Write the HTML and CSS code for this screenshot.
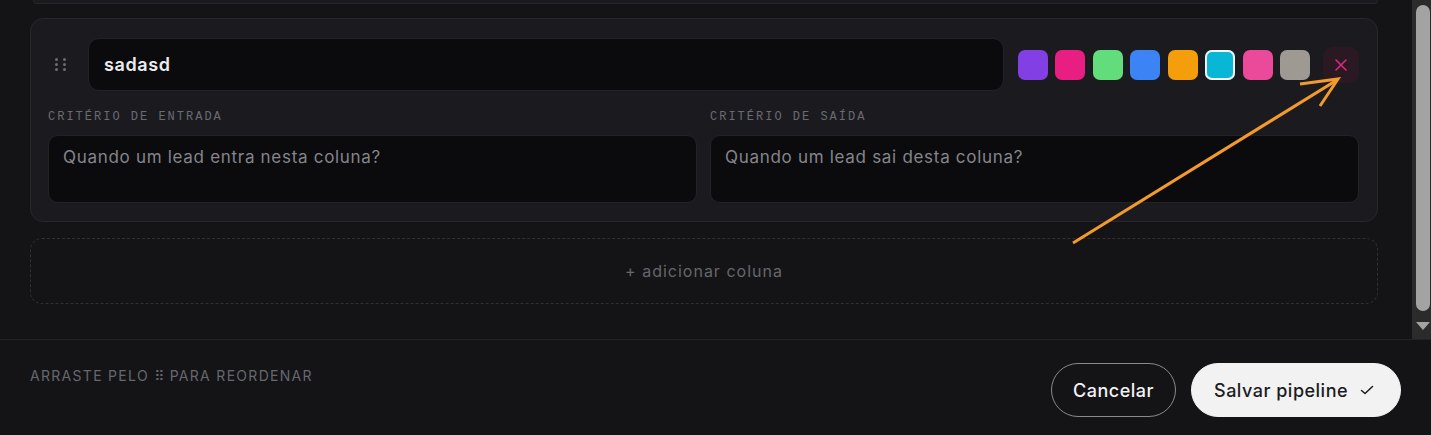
FILE: index.html
```html
<!DOCTYPE html>
<html lang="pt-BR">
<head>
<meta charset="utf-8">
<title>Editar pipeline</title>
<link rel="stylesheet" href="styles.css">
</head>
<body>
<div class="modal">
  <div class="modal-body">
    <div class="scroll-content">
      <div class="prev-card"></div>
      <div class="card">
        <div class="card-top">
          <div class="handle" aria-label="Arrastar">
            <span></span><span></span><span></span><span></span><span></span><span></span>
          </div>
          <input class="name-input" type="text" value="sadasd">
          <div class="swatches">
            <button class="swatch sw-purple"></button>
            <button class="swatch sw-magenta"></button>
            <button class="swatch sw-green"></button>
            <button class="swatch sw-blue"></button>
            <button class="swatch sw-orange"></button>
            <button class="swatch sw-cyan selected"></button>
            <button class="swatch sw-pink"></button>
            <button class="swatch sw-stone"></button>
          </div>
          <button class="remove-btn" aria-label="Remover coluna">
            <svg width="14" height="14" viewBox="0 0 14 14"><path d="M2 2 L12 12 M12 2 L2 12" stroke="#d9287e" stroke-width="1.6" stroke-linecap="round" fill="none"/></svg>
          </button>
        </div>
        <div class="criteria">
          <div class="field">
            <label class="field-label">CRITÉRIO DE ENTRADA</label>
            <textarea class="field-input" placeholder="Quando um lead entra nesta coluna?"></textarea>
          </div>
          <div class="field">
            <label class="field-label">CRITÉRIO DE SAÍDA</label>
            <textarea class="field-input" placeholder="Quando um lead sai desta coluna?"></textarea>
          </div>
        </div>
      </div>
      <button class="add-col">+ adicionar coluna</button>
    </div>
    <div class="scrollbar" aria-hidden="true">
      <div class="scroll-thumb"></div>
      <div class="scroll-arrow"></div>
    </div>
  </div>
  <div class="modal-footer">
    <div class="hint">ARRASTE PELO <span class="hint-glyph">⠿</span> PARA REORDENAR</div>
    <div class="actions">
      <button class="btn btn-ghost">Cancelar</button>
      <button class="btn btn-primary">Salvar pipeline <svg class="check" width="16" height="12" viewBox="0 0 16 12"><path d="M2.5 6.5 L6 9.5 L13.5 2.5" stroke="#1c1c1e" stroke-width="1.5" fill="none" stroke-linecap="round" stroke-linejoin="round"/></svg></button>
    </div>
  </div>
  <svg class="annotation" width="1431" height="435" viewBox="0 0 1431 435">
    <path d="M1073 243 L1337 80" stroke="#f39a2c" stroke-width="3" fill="none"/>
    <path d="M1300 84 L1338 79 L1320 106" stroke="#f39a2c" stroke-width="3" fill="none" stroke-linejoin="miter"/>
  </svg>
</div>
</body>
</html>
```

FILE: styles.css
```css
* { box-sizing: border-box; }

html, body {
  margin: 0;
  padding: 0;
  background: #141416;
  height: 435px;
  overflow: hidden;
}

body {
  font-family: "Inter", "Noto Sans", sans-serif;
  color: #e8e8ea;
}

.modal {
  position: relative;
  display: flex;
  flex-direction: column;
  height: 435px;
}

.modal-body {
  height: 339px;
  flex: none;
  display: flex;
}

.scroll-content {
  flex: 1;
  min-width: 0;
  overflow: hidden;
  padding: 0 34px 0 30px;
  display: flex;
  flex-direction: column;
}

.scrollbar {
  width: 19px;
  flex: none;
  background: #2b2b2c;
  display: flex;
  flex-direction: column;
  align-items: flex-end;
  padding: 5px 1px 0 0;
}
.scroll-thumb {
  width: 14px;
  height: 306px;
  border-radius: 7px;
  background: #a3a3a3;
}
.scroll-arrow {
  margin-top: 11px;
  width: 0;
  height: 0;
  border-left: 7px solid transparent;
  border-right: 7px solid transparent;
  border-top: 8px solid #a3a3a3;
}

.prev-card {
  flex: none;
  height: 4px;
  margin: 0 0 14px 3px;
  background: #1b1b1f;
  border: 1px solid #26262b;
  border-top: none;
  border-radius: 0 0 12px 12px;
}

.card {
  flex: none;
  background: #1b1b1f;
  border: 1px solid #26262b;
  border-radius: 13px;
  padding: 19px 18px 18px 17px;
}

.card-top {
  display: flex;
  align-items: center;
}

.handle {
  width: 24px;
  height: 53px;
  display: grid;
  grid-template-columns: 3px 3px;
  grid-template-rows: 3px 3px 3px;
  gap: 2px 5px;
  align-content: center;
  justify-content: center;
  margin-right: 16px;
}
.handle span {
  width: 3px;
  height: 3px;
  border-radius: 50%;
  background: #6c6c74;
}

.name-input {
  flex: 1;
  min-width: 0;
  height: 53px;
  background: #0b0b0d;
  border: 1px solid #232327;
  border-radius: 11px;
  padding: 0 15px;
  font-family: "Inter", "Noto Sans", sans-serif;
  font-size: 18px;
  font-weight: 600;
  letter-spacing: 0.6px;
  color: #ececee;
  outline: none;
}

.swatches {
  display: flex;
  gap: 7.5px;
  margin-left: 14px;
}
.swatch {
  width: 30px;
  height: 30px;
  border: none;
  border-radius: 7px;
  padding: 0;
}
.swatch.selected {
  box-shadow: inset 0 0 0 2px #f4f4f5;
}
.sw-purple { background: #823fe4; }
.sw-magenta { background: #e81e83; }
.sw-green { background: #63dd7b; }
.sw-blue { background: #3c84f6; }
.sw-orange { background: #f49e0c; }
.sw-cyan { background: #07b7d5; }
.sw-pink { background: #eb4a9a; }
.sw-stone { background: #9e9a93; }

.remove-btn {
  width: 36px;
  height: 36px;
  margin-left: 13px;
  border: none;
  border-radius: 9px;
  background: #2a1822;
  display: flex;
  align-items: center;
  justify-content: center;
  padding: 0;
}

.criteria {
  display: grid;
  grid-template-columns: 1fr 1fr;
  gap: 13px;
  margin-top: 18px;
}

.field {
  display: flex;
  flex-direction: column;
}

.field-label {
  font-family: "Liberation Mono", "DejaVu Sans Mono", monospace;
  font-size: 12px;
  line-height: 16px;
  letter-spacing: 2px;
  color: #6a6a72;
  margin-bottom: 10px;
}

.field-input {
  height: 68px;
  resize: none;
  background: #0b0b0d;
  border: 1px solid #232327;
  border-radius: 10px;
  padding: 10px 14px;
  font-family: "Inter", "Noto Sans", sans-serif;
  font-size: 17px;
  line-height: 22px;
  letter-spacing: 0.7px;
  color: #d0d0d4;
  outline: none;
}
.field-input::placeholder {
  color: #85858b;
}

.add-col {
  flex: none;
  margin-top: 16px;
  height: 66px;
  background: transparent;
  border: 1px dashed #2f2f34;
  border-radius: 12px;
  font-family: "Inter", "Noto Sans", sans-serif;
  font-size: 16px;
  letter-spacing: 1px;
  color: #66666d;
}

.modal-footer {
  flex: 1;
  border-top: 1px solid #222226;
  background: #141416;
  display: flex;
  justify-content: space-between;
  align-items: flex-start;
  padding: 23px 30px 0 30px;
}

.hint {
  margin-top: 5px;
  font-family: "Inter", "Noto Sans", sans-serif;
  font-size: 14px;
  line-height: 16px;
  letter-spacing: 1.3px;
  color: #67676e;
}
.hint-glyph {
  font-family: "DejaVu Sans", sans-serif;
  letter-spacing: 0;
}

.actions {
  display: flex;
  gap: 15px;
}

.btn {
  height: 54px;
  border-radius: 27px;
  font-family: "Inter", "Noto Sans", sans-serif;
  font-size: 18px;
  font-weight: 500;
  letter-spacing: 0.5px;
  display: flex;
  align-items: center;
}

.btn-ghost {
  width: 125px;
  justify-content: center;
  background: transparent;
  border: 1px solid #8a8a8e;
  color: #f2f2f4;
}

.btn-primary {
  width: 210px;
  padding: 0 22px;
  background: #f2f2f2;
  border: 1px solid #f2f2f2;
  color: #1c1c1e;
  gap: 11px;
}

.annotation {
  position: absolute;
  top: 0;
  left: 0;
  pointer-events: none;
}
```
